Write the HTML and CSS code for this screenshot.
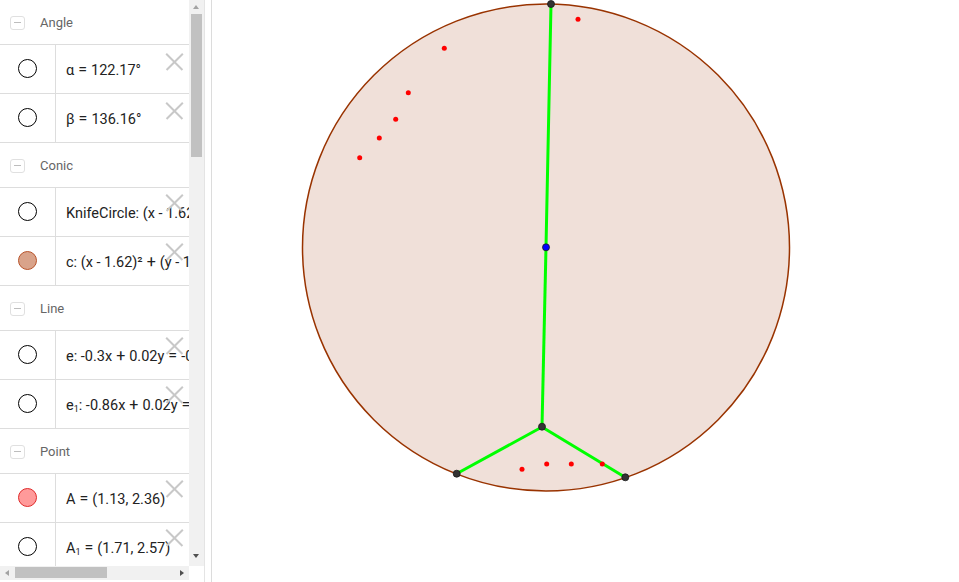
FILE: index.html
```html
<!DOCTYPE html>
<html>
<head>
<meta charset="utf-8">
<link rel="stylesheet" href="styles.css">
</head>
<body>
<div class="app">
  <div class="sidebar">
    <div class="list">
      <div class="group">
        <div class="ghead"><span class="collapse"></span><span class="gname">Angle</span></div>
        <div class="item"><div class="marble"><span class="dot"></span></div><div class="expr">α<span class="op">=</span>122.17°</div><span class="del"></span></div>
        <div class="item"><div class="marble"><span class="dot"></span></div><div class="expr">β<span class="op">=</span>136.16°</div><span class="del"></span></div>
      </div>
      <div class="group">
        <div class="ghead"><span class="collapse"></span><span class="gname">Conic</span></div>
        <div class="item"><div class="marble"><span class="dot"></span></div><div class="expr">KnifeCircle: (x - 1.62)²<span class="op">+</span>(y - 1.5)²<span class="op">=</span>1.75</div><span class="del up"></span></div>
        <div class="item"><div class="marble"><span class="dot conic"></span></div><div class="expr">c: (x - 1.62)²<span class="op">+</span>(y - 1.5)²<span class="op">=</span>1.75</div><span class="del up"></span></div>
      </div>
      <div class="group">
        <div class="ghead"><span class="collapse"></span><span class="gname">Line</span></div>
        <div class="item"><div class="marble"><span class="dot"></span></div><div class="expr">e: -0.3x<span class="op">+</span>0.02y<span class="op">=</span>-0.45</div><span class="del up"></span></div>
        <div class="item"><div class="marble"><span class="dot"></span></div><div class="expr">e<sub>1</sub>: -0.86x<span class="op">+</span>0.02y<span class="op">=</span>-1.36</div><span class="del up"></span></div>
      </div>
      <div class="group">
        <div class="ghead"><span class="collapse"></span><span class="gname">Point</span></div>
        <div class="item"><div class="marble"><span class="dot point"></span></div><div class="expr">A<span class="op">=</span>(1.13, 2.36)</div><span class="del up"></span></div>
        <div class="item"><div class="marble"><span class="dot"></span></div><div class="expr">A<sub>1</sub><span class="op">=</span>(1.71, 2.57)</div><span class="del up"></span></div>
      </div>
    </div>
    <div class="vscroll">
      <span class="arr-up"></span>
      <span class="vthumb"></span>
      <span class="arr-down"></span>
    </div>
    <div class="hscroll">
      <span class="arr-left"></span>
      <span class="hthumb"></span>
      <span class="arr-right"></span>
    </div>
    <div class="corner"></div>
  </div>
  <div class="splitter"></div>
  <div class="canvas">
    <svg width="747" height="582" viewBox="212 0 747 582">
      <circle cx="546" cy="247.5" r="243.5" fill="#f0e0d9" stroke="#993300" stroke-width="1.5"/>
      <g stroke="#00ff00" stroke-width="3" fill="none" stroke-linecap="round">
        <line x1="551" y1="4" x2="546" y2="247"/>
        <line x1="546" y1="247" x2="542" y2="427"/>
        <line x1="542" y1="427" x2="457" y2="473.5"/>
        <line x1="542" y1="427" x2="625.5" y2="477.5"/>
      </g>
      <g fill="#ff0000">
        <circle cx="578" cy="19.3" r="2.5"/>
        <circle cx="444.3" cy="48.3" r="2.5"/>
        <circle cx="408.3" cy="92.7" r="2.5"/>
        <circle cx="395.7" cy="119.3" r="2.5"/>
        <circle cx="379.3" cy="138" r="2.5"/>
        <circle cx="359.7" cy="157.7" r="2.5"/>
        <circle cx="522" cy="469.3" r="2.5"/>
        <circle cx="546.7" cy="464" r="2.5"/>
        <circle cx="571.3" cy="464" r="2.5"/>
        <circle cx="602.3" cy="464" r="2.5"/>
      </g>
      <g fill="#333333" stroke="#1a1a1a" stroke-width="0.8">
        <circle cx="551" cy="4" r="3.5"/>
        <circle cx="542" cy="426.7" r="3.5"/>
        <circle cx="456.7" cy="473.7" r="3.5"/>
        <circle cx="625.3" cy="477.3" r="3.5"/>
      </g>
      <circle cx="546" cy="247.3" r="3.5" fill="#0000ff" stroke="#1a1a1a" stroke-width="0.8"/>
    </svg>
  </div>
</div>
</body>
</html>
```
FILE: styles.css
```css
html, body {
  margin: 0;
  padding: 0;
  background: #ffffff;
  overflow: hidden;
}
.app {
  display: flex;
  width: 959px;
  height: 582px;
}
.sidebar {
  width: 204px;
  height: 582px;
  display: grid;
  grid-template-columns: 189px 15px;
  grid-template-rows: 566px 14px 2px;
  flex: none;
}
.list {
  overflow: hidden;
  font-family: Roboto, "Liberation Sans", sans-serif;
}
.ghead {
  height: 44px;
  border-bottom: 1px solid #dddddd;
  display: flex;
  align-items: center;
}
.collapse {
  width: 15px;
  height: 14px;
  border: 1px solid #e0e0e0;
  border-radius: 3px;
  margin-left: 10px;
  margin-top: 2px;
  position: relative;
  box-sizing: border-box;
}
.collapse::after {
  content: "";
  position: absolute;
  left: 3px;
  top: 5px;
  width: 7px;
  height: 1px;
  background: #bdbdbd;
}
.gname {
  margin-left: 15px;
  font-size: 13px;
  color: #666666;
}
.item {
  height: 48px;
  border-bottom: 1px solid #dddddd;
  display: flex;
  align-items: center;
  position: relative;
  white-space: nowrap;
}
.marble {
  width: 56px;
  height: 48px;
  border-right: 1px solid #dddddd;
  display: flex;
  align-items: center;
  justify-content: center;
  flex: none;
  padding-bottom: 2px;
  box-sizing: border-box;
}
.dot {
  width: 19px;
  height: 19px;
  border: 1px solid #000000;
  border-radius: 50%;
  box-sizing: border-box;
}
.dot.conic {
  background: #d9a38a;
  border: 1.5px solid #b8532a;
}
.dot.point {
  background: #ff9a9a;
  border: 1px solid #e02a2a;
}
.expr {
  padding-left: 10px;
  font-size: 14.5px;
  color: #222222;
}
.op {
  font-size: 16px;
  padding: 0 4px;
}
.expr sub {
  font-size: 9px;
  vertical-align: -2px;
}
.del {
  position: absolute;
  right: 6px;
  top: 8px;
  width: 17px;
  height: 17px;
}
.del.up {
  top: 6px;
}
.del::before, .del::after {
  content: "";
  position: absolute;
  left: -3px;
  top: 8px;
  width: 23px;
  height: 1.5px;
  background: #c8c8c8;
  transform: rotate(45deg);
}
.del::after {
  transform: rotate(-45deg);
}
.vscroll {
  background: #f1f1f1;
  position: relative;
}
.vthumb {
  position: absolute;
  left: 2px;
  top: 14px;
  width: 11px;
  height: 143px;
  background: #c1c1c1;
}
.arr-up, .arr-down, .arr-left, .arr-right {
  position: absolute;
  width: 0;
  height: 0;
}
.arr-up {
  left: 4px;
  top: 5px;
  border-left: 3.5px solid transparent;
  border-right: 3.5px solid transparent;
  border-bottom: 4px solid #a3a3a3;
}
.arr-down {
  left: 4px;
  top: 554px;
  border-left: 3.5px solid transparent;
  border-right: 3.5px solid transparent;
  border-top: 4px solid #505050;
}
.hscroll {
  background: #f1f1f1;
  position: relative;
}
.hthumb {
  position: absolute;
  left: 15px;
  top: 1px;
  width: 92px;
  height: 11px;
  background: #c1c1c1;
}
.arr-left {
  left: 5px;
  top: 3.5px;
  border-top: 3.5px solid transparent;
  border-bottom: 3.5px solid transparent;
  border-right: 4px solid #a3a3a3;
}
.arr-right {
  left: 180px;
  top: 3.5px;
  border-top: 3.5px solid transparent;
  border-bottom: 3.5px solid transparent;
  border-left: 4px solid #505050;
}
.corner {
  background: #ffffff;
}
.splitter {
  width: 6px;
  flex: none;
  border-left: 1px solid #e4e4e4;
  border-right: 1px solid #dcdcdc;
  background: #ffffff;
}
.canvas {
  flex: 1;
  height: 582px;
  overflow: hidden;
}
.canvas svg {
  display: block;
}
```
